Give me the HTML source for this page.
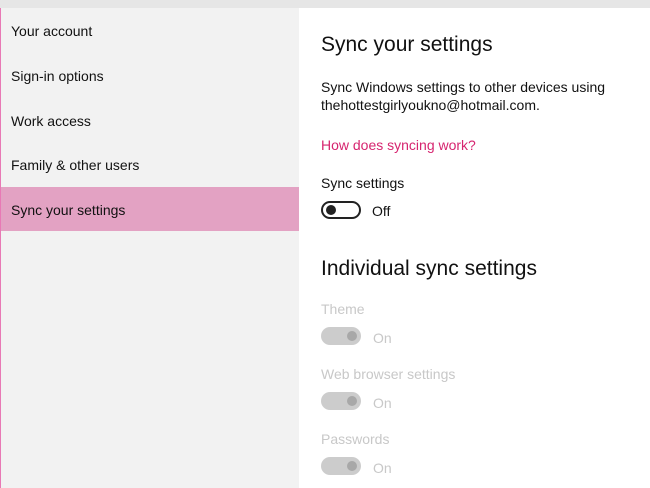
<html><head><style>
body{margin:0;width:650px;height:488px;overflow:hidden;background:#fff;font-family:"Liberation Sans",sans-serif;position:relative}
.top{position:absolute;left:0;top:0;width:650px;height:8px;background:#e6e6e6}
.side{position:absolute;left:0;top:8px;width:298px;height:480px;background:#f2f2f2;border-left:1px solid #e879b5}
.it{position:absolute;left:11px;font-size:14px;color:#111}
.sel{position:absolute;left:1px;top:187px;width:298px;height:44px;background:#e3a2c3}
.t{position:absolute;left:321px;color:#111}
.tg{position:absolute;left:321px;width:36px;height:14px;border-radius:9px}
.off{border:2px solid #222;background:#fff}
.off:after{content:"";position:absolute;left:3px;top:2px;width:10px;height:10px;border-radius:50%;background:#222}
.dis{background:#ccc;height:18px;width:40px}
.dis:after{content:"";position:absolute;left:26px;top:4px;width:10px;height:10px;border-radius:50%;background:#a8a8a8}
.g{color:#c8c8c8}
</style></head><body>
<div class="top"></div>
<div class="side"></div>
<div class="sel"></div>
<div class="it" style="top:23px">Your account</div>
<div class="it" style="top:68px">Sign-in options</div>
<div class="it" style="top:113px">Work access</div>
<div class="it" style="top:157px">Family &amp; other users</div>
<div class="it" style="top:202px">Sync your settings</div>
<div class="t" style="top:33px;font-size:21px">Sync your settings</div>
<div class="t" style="top:78px;font-size:14px;line-height:18px">Sync Windows settings to other devices using<br>thehottestgirlyoukno@hotmail.com.</div>
<div class="t" style="top:137px;font-size:14px;color:#d6246f">How does syncing work?</div>
<div class="t" style="top:175px;font-size:14px">Sync settings</div>
<div class="tg off" style="top:201px"></div>
<div class="t" style="left:372px;top:203px;font-size:14px">Off</div>
<div class="t" style="top:257px;font-size:21px">Individual sync settings</div>
<div class="t g" style="top:301px;font-size:14px">Theme</div>
<div class="tg dis" style="top:327px"></div>
<div class="t g" style="left:373px;top:330px;font-size:14px">On</div>
<div class="t g" style="top:366px;font-size:14px">Web browser settings</div>
<div class="tg dis" style="top:392px"></div>
<div class="t g" style="left:373px;top:395px;font-size:14px">On</div>
<div class="t g" style="top:431px;font-size:14px">Passwords</div>
<div class="tg dis" style="top:457px"></div>
<div class="t g" style="left:373px;top:460px;font-size:14px">On</div>
</body></html>
